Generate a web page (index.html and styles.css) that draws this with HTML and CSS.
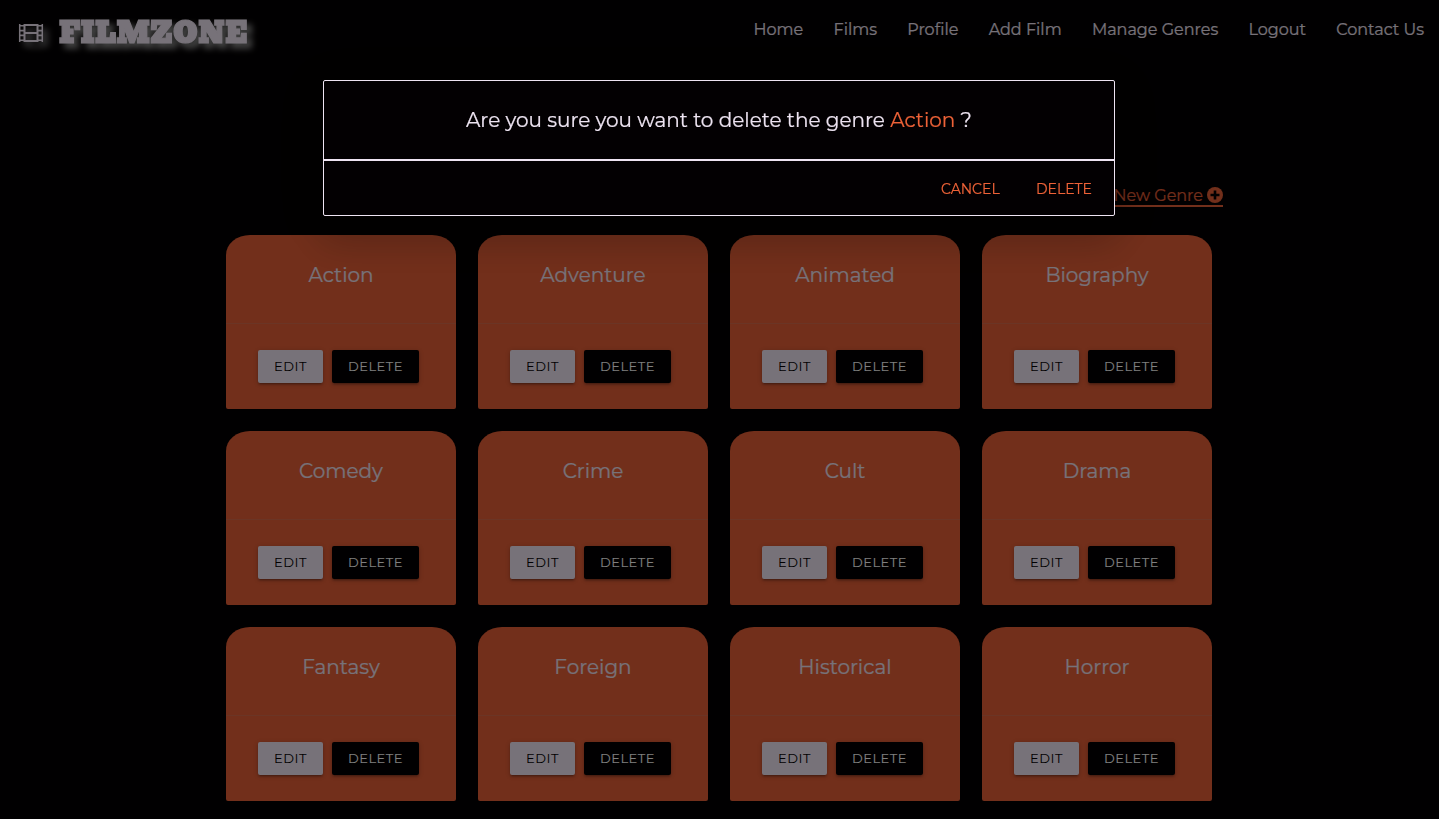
FILE: index.html
```html
<!DOCTYPE html>
<html lang="en">
<head>
<meta charset="utf-8">
<title>Filmzone - Manage Genres</title>
<link rel="stylesheet" href="styles.css">
</head>
<body>
<header class="navbar">
  <a class="brand">
    <svg class="brand-icon" viewBox="0 0 26 20" width="26" height="20" fill="none" stroke="currentColor"><path stroke-width="1.5" d="M1.7 1v18M24.3 1v18"/><path stroke-width="2" d="M6.5 1v18M19.5 1v18M6 2h14M6 10h14M6 18h14"/><path stroke-width="1.6" d="M1 2.7h5M1 7.6h5M1 12.4h5M1 17.3h5M20 2.7h5M20 7.6h5M20 12.4h5M20 17.3h5"/></svg>
    <span class="brand-name">FILMZONE</span>
  </a>
  <nav class="nav-links"><a>Home</a><a>Films</a><a>Profile</a><a>Add Film</a><a>Manage Genres</a><a>Logout</a><a>Contact Us</a></nav>
</header>
<main class="content">
  <div class="toolbar"><a class="add-genre"><span>New Genre</span><svg width="16" height="16" viewBox="0 0 16 16"><circle cx="8" cy="8" r="8" fill="currentColor"/><path d="M8 3.5v9M3.5 8h9" stroke="#030002" stroke-width="2.6"/></svg></a></div>
  <div class="grid">
    <section class="card"><h2 class="card-title">Action</h2><div class="card-action"><a class="btn edit">EDIT</a><a class="btn delete">DELETE</a></div></section>
    <section class="card"><h2 class="card-title">Adventure</h2><div class="card-action"><a class="btn edit">EDIT</a><a class="btn delete">DELETE</a></div></section>
    <section class="card"><h2 class="card-title">Animated</h2><div class="card-action"><a class="btn edit">EDIT</a><a class="btn delete">DELETE</a></div></section>
    <section class="card"><h2 class="card-title">Biography</h2><div class="card-action"><a class="btn edit">EDIT</a><a class="btn delete">DELETE</a></div></section>
    <section class="card"><h2 class="card-title">Comedy</h2><div class="card-action"><a class="btn edit">EDIT</a><a class="btn delete">DELETE</a></div></section>
    <section class="card"><h2 class="card-title">Crime</h2><div class="card-action"><a class="btn edit">EDIT</a><a class="btn delete">DELETE</a></div></section>
    <section class="card"><h2 class="card-title">Cult</h2><div class="card-action"><a class="btn edit">EDIT</a><a class="btn delete">DELETE</a></div></section>
    <section class="card"><h2 class="card-title">Drama</h2><div class="card-action"><a class="btn edit">EDIT</a><a class="btn delete">DELETE</a></div></section>
    <section class="card"><h2 class="card-title">Fantasy</h2><div class="card-action"><a class="btn edit">EDIT</a><a class="btn delete">DELETE</a></div></section>
    <section class="card"><h2 class="card-title">Foreign</h2><div class="card-action"><a class="btn edit">EDIT</a><a class="btn delete">DELETE</a></div></section>
    <section class="card"><h2 class="card-title">Historical</h2><div class="card-action"><a class="btn edit">EDIT</a><a class="btn delete">DELETE</a></div></section>
    <section class="card"><h2 class="card-title">Horror</h2><div class="card-action"><a class="btn edit">EDIT</a><a class="btn delete">DELETE</a></div></section>
  </div>
</main>
<div class="overlay"></div>
<div class="modal" role="dialog">
  <div class="modal-content"><p class="modal-text">Are you sure you want to delete the genre <span class="accent">Action</span> ?</p></div>
  <div class="modal-footer"><a class="m-cancel">CANCEL</a><a class="m-delete">DELETE</a></div>
</div>
</body>
</html>
```

FILE: styles.css
```css
* { box-sizing: border-box; }
html, body { height: 100%; }
body {
  margin: 0;
  overflow: hidden;
  background: #030002;
  color: #eee4f2;
  font-family: Montserrat, Inter, sans-serif;
  -webkit-text-stroke: .2px currentColor;
}

/* Navigation */
.navbar { height: 60px; display: flex; justify-content: space-between; padding-left: 18px; }
.brand { display: flex; align-items: flex-start; }
.brand-icon { margin-top: 23px; filter: drop-shadow(5px 5px 3px #888); }
.brand-name {
  margin: 14px 0 0 15px;
  font: 400 29px/38px Bevan, "Alfa Slab One", "DejaVu Serif", serif;
  letter-spacing: .5px;
  -webkit-text-stroke: 1.2px currentColor;
  filter: drop-shadow(5px 5px 3px #888);
}
.nav-links { display: flex; padding-right: 15px; gap: 30.25px; }
.nav-links a { font-size: 16px; line-height: 60px; white-space: nowrap; }

/* Genre grid */
.content { width: 986px; margin-left: 226px; }
.toolbar { height: 175px; display: flex; justify-content: flex-end; align-items: flex-start; padding-top: 125px; margin-right: -11px; }
.add-genre { display: flex; align-items: center; gap: 4px; height: 22px; border-bottom: 2px solid; color: #e45e36; font-size: 16px; }
.grid { display: grid; grid-template-columns: repeat(4, 230px); gap: 22px; }
.card { height: 174px; display: flex; flex-direction: column; background: #e45e36; border-radius: 24px 24px 2px 2px / 20px 20px 2px 2px; }
.card-title { height: 88px; margin: 0; padding-top: 24px; text-align: center; font-size: 20px; line-height: 32px; font-weight: 400; }
.card-action { flex: 1; display: flex; gap: 9px; padding: 26px 32px 0; border-top: 1px solid rgba(160,160,160,.2); }
.btn { height: 33px; border-radius: 2px; font-size: 13px; line-height: 33px; letter-spacing: .5px; text-align: center; -webkit-text-stroke: .05px; box-shadow: 0 2px 2px rgba(0,0,0,.14), 0 3px 1px -2px rgba(0,0,0,.12), 0 1px 5px rgba(0,0,0,.2); }
.edit { width: 65px; background: #eee4f2; color: #030002; }
.delete { width: 87px; background: #030002; color: #fff; }

/* Confirmation dialog */
.overlay { position: fixed; inset: 0; background: rgba(0,0,0,.5); }
.modal {
  position: fixed; top: 80px; left: 323px; width: 792px; height: 136px;
  display: flex; flex-direction: column;
  background: #030002; border: 1px solid #eee4f2; border-radius: 2px;
  box-shadow: 0 24px 38px 3px rgba(0,0,0,.14), 0 9px 46px 8px rgba(0,0,0,.12), 0 11px 15px -7px rgba(0,0,0,.2);
}
.modal-content { height: 80px; border-bottom: 2px solid #eee4f2; }
.modal-text { margin: 0; text-align: center; font-size: 20px; line-height: 78px; }
.accent { color: #ee6238; }
.modal-footer { display: flex; justify-content: flex-end; gap: 36px; padding-right: 22px; color: #ee6238; font-size: 14px; line-height: 57px; }
.m-cancel { width: 59px; }
.m-delete { width: 56px; }
```
